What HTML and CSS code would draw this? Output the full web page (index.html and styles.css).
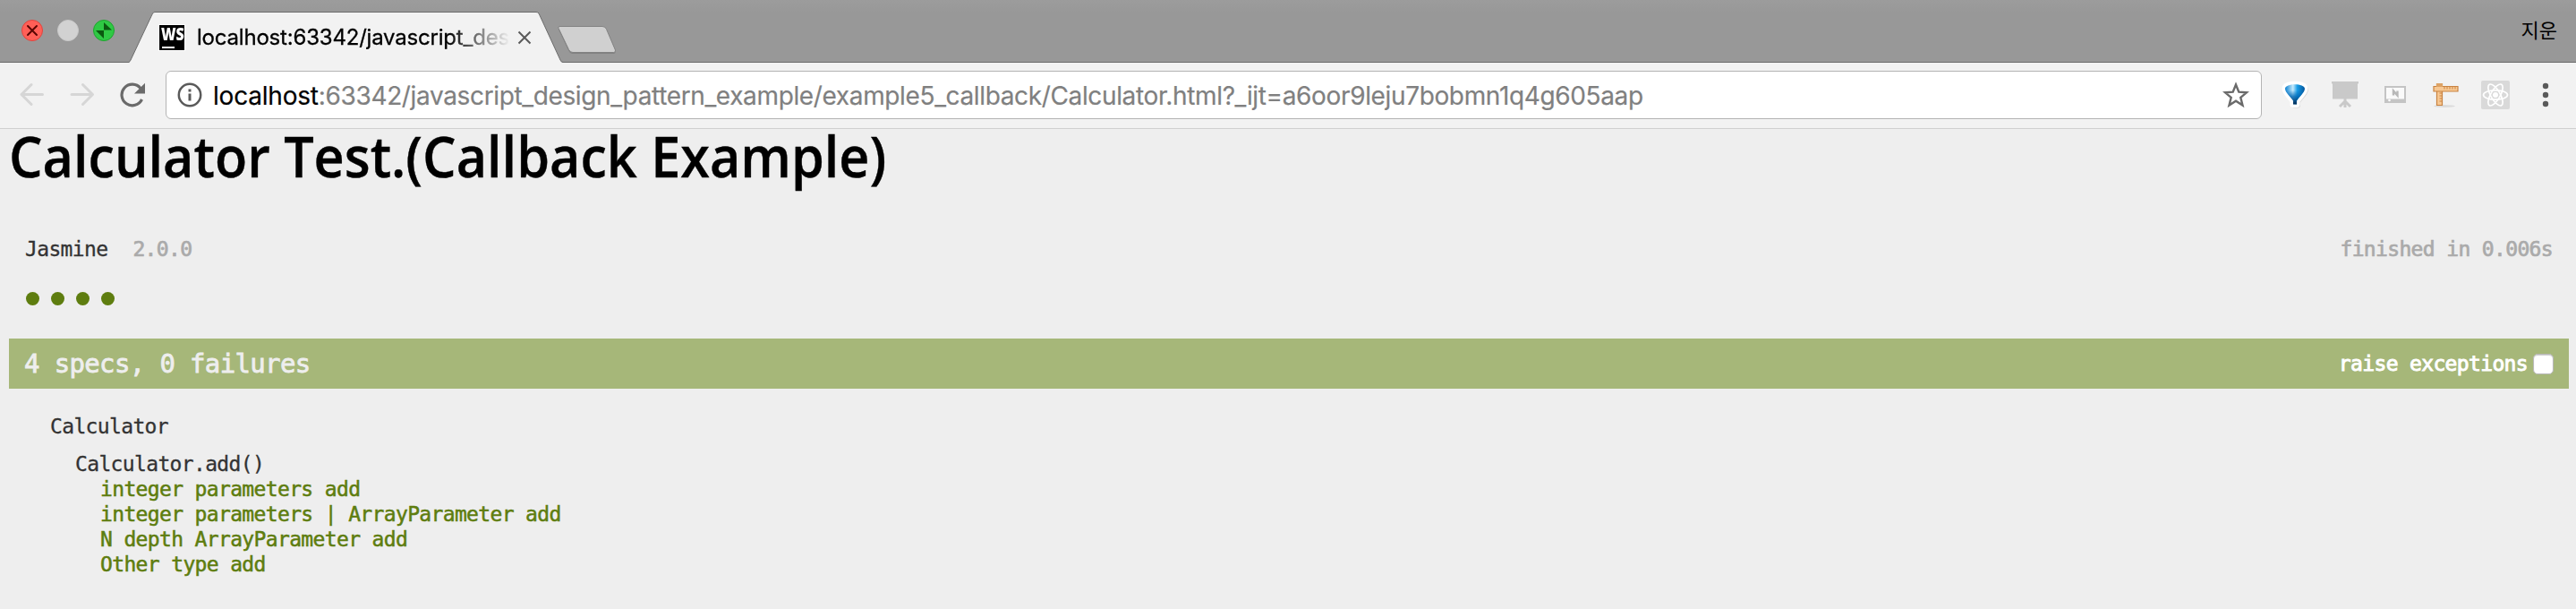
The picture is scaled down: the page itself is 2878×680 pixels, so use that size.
FILE: index.html
```html
<!DOCTYPE html>
<html lang="ko">
<head>
<meta charset="utf-8">
<title>Calculator Test</title>
<link rel="stylesheet" href="styles.css">
</head>
<body>
<header class="tabstrip">
  <svg class="lights" width="104" height="24" viewBox="0 0 104 24">
    <circle cx="12" cy="12" r="11.5" fill="#ff5f57" stroke="#e0443e"/>
    <path d="M7 7l10 10M17 7L7 17" stroke="#5a0603" stroke-width="2" stroke-linecap="round"/>
    <circle cx="52" cy="12" r="11.5" fill="#d2d2d2" stroke="#c8c8c8"/>
    <circle cx="92" cy="12" r="11.5" fill="#2fc944" stroke="#1fa32f"/>
    <path d="M92 3v8.500h9zM92 21v-9h-9z" fill="#0b5a10"/>
  </svg>
  <div class="tab">
    <svg class="tab-shape" width="486" height="57" viewBox="0 0 486 57">
      <path d="M0 57L1 56.500Q2 56 3 54L27.500 2Q28.500 .5 30 .5H456Q458 .5 459 2L483 54Q484 56 485 56.500L486 57z" fill="#f2f2f2"/>
      <path d="M0 56.500H1Q2 56 3 54L27.500 2Q28.500 .5 30 .5H456Q458 .5 459 2L483 54Q484 56.500 486 56.500" fill="none" stroke="#6c6c6c"/>
    </svg>
    <div class="tab-body">
      <span class="favicon"><b>WS</b><i></i></span>
      <span class="tab-title">localhost:63342/javascript_des</span>
      <svg class="tab-close" width="16" height="16" viewBox="0 0 16 16"><path d="M1.500 1.500l13 13M14.500 1.500l-13 13" stroke="#5a5a5a" stroke-width="2"/></svg>
    </div>
  </div>
  <svg class="new-tab" width="68" height="34" viewBox="0 0 68 34">
    <path d="M3 3H51Q54 3 55.500 6L65.500 29Q66 32 63.500 32H18Q15 32 13.500 29L2 5Q1.500 3 3 3z" fill="#808080"/>
    <path d="M3 1.500H51Q54 1.500 55.500 4.500L65.500 28Q66 30.500 63.500 30.500H18Q15 30.500 13.500 27.500L2 3.500Q1.500 1.500 3 1.500z" fill="#d0d0d0" stroke="#828282"/>
  </svg>
  <span class="profile">지운</span>
</header>
<nav class="toolbar">
  <svg class="nav-icons" width="140" height="28" viewBox="0 0 140 28">
    <g fill="none" stroke="#d6d6d6" stroke-width="3" stroke-linecap="round" stroke-linejoin="round">
      <path d="M25.500 13.500H2.500M13 2.500l-11 11 11 11"/>
      <path d="M58 13.500H81M70.500 2.500l11 11-11 11"/>
    </g>
    <path d="M136.500 19A11.800 11.800 0 1 1 135 6.500" fill="none" stroke="#6a6a6a" stroke-width="3.200"/>
    <path d="M140 .8V12.500H128z" fill="#6a6a6a"/>
  </svg>
  <div class="address">
    <svg width="28" height="28" viewBox="0 0 28 28"><circle cx="14" cy="14" r="12.200" fill="none" stroke="#5a5a5a" stroke-width="2.500"/><path d="M14 7.500v3M14 12.500v8" stroke="#5a5a5a" stroke-width="3"/></svg>
    <span class="url"><span class="host">localhost</span>:63342/javascript_design_pattern_example/example5_callback/Calculator.html?_ijt=a6oor9leju7bobmn1q4g605aap</span>
    <svg class="star" width="30" height="30" viewBox="0 0 30 30"><path d="M15 3.500l3.300 8.200 8.700.6-6.700 5.600 2.200 8.600-7.500-4.800-7.500 4.800 2.200-8.600L3 12.300l8.700-.6z" fill="none" stroke="#6a6a6a" stroke-width="2.400"/></svg>
  </div>
  <svg class="extensions" width="300" height="36" viewBox="0 0 300 36">
    <defs>
      <linearGradient id="balloon" x1="0" x2="1"><stop offset="0" stop-color="#0a7fd0"/><stop offset=".4" stop-color="#c4eafc"/><stop offset=".62" stop-color="#179ce6"/><stop offset="1" stop-color="#04569c"/></linearGradient>
      <linearGradient id="shade" x1="0" x2="0" y1="0" y2="1"><stop offset=".3" stop-color="#0068b4" stop-opacity="0"/><stop offset=".6" stop-color="#0068b4" stop-opacity=".8"/><stop offset="1" stop-color="#002b55"/></linearGradient>
      <path id="shape" d="M5 11C5 4.500 27 4.500 27 11C27 15 21 20 18 24.500V28.500H14V24.500C11 20 5 15 5 11z"/>
    </defs>
    <g stroke-linejoin="round">
      <use href="#shape" transform="translate(1 1)" fill="#d0d0d0" stroke="#d8d8d8" stroke-width="6"/>
      <use href="#shape" fill="#fff" stroke="#fff" stroke-width="7"/>
      <use href="#shape" fill="url(#balloon)"/>
      <use href="#shape" fill="url(#shade)"/>
    </g>
    <g fill="#c9c9c9"><path d="M57 3h30v2.500h-1V22.500H58V5.500h-1z"/><path d="M72 22v10M72 25l-6 6M72 25l6 6" stroke="#c9c9c9" stroke-width="3"/></g>
    <rect x="117" y="9" width="22" height="17" fill="#fafafa" stroke="#c4c4c4" stroke-width="2"/>
    <path d="M117 24h22" stroke="#c4c4c4" stroke-width="3"/><circle cx="121.500" cy="24" r="1.300" fill="#fff"/>
    <path d="M126 18.500v-5l4.500 5v-5" fill="none" stroke="#b8b8b8" stroke-width="2.400"/>
    <ellipse cx="183" cy="30.500" rx="12" ry="1.500" fill="#dcdcdc"/>
    <g fill="#f7c893" stroke="#c98341" stroke-width="1.200"><path d="M174.500 5.500h6v24h-6z"/><path d="M171 8.500h27v5.500h-27z"/></g>
    <path d="M174 5h7v4h-7z" fill="#dda366"/>
    <path d="M183 9v2.500M186 9v2.500M189 9v2.500M192 9v2.500M195 9v2.500M180 16h-2.500M180 19h-2.500M180 22h-2.500M180 25h-2.500" stroke="#c98341"/>
    <rect x="224" y="2" width="32" height="32" rx="2" fill="#d9d9d9"/>
    <g fill="none" stroke="#fff" stroke-width="1.700"><ellipse cx="240" cy="18" rx="13.500" ry="5.200"/><ellipse cx="240" cy="18" rx="13.500" ry="5.200" transform="rotate(60 240 18)"/><ellipse cx="240" cy="18" rx="13.500" ry="5.200" transform="rotate(120 240 18)"/></g>
    <circle cx="240" cy="18" r="3" fill="#fff"/>
    <g fill="#5a5a5a"><circle cx="296" cy="8" r="3.200"/><circle cx="296" cy="18" r="3.200"/><circle cx="296" cy="28" r="3.200"/></g>
  </svg>
</nav>
<main class="page">
  <h1>Calculator Test.(Callback Example)</h1>
  <div class="banner"><span>Jasmine</span><span class="muted version">2.0.0</span><span class="muted duration">finished in 0.006s</span></div>
  <div class="symbols"><i></i><i></i><i></i><i></i></div>
  <div class="bar"><span>4 specs, 0 failures</span><label class="exceptions">raise exceptions<span class="checkbox"></span></label></div>
  <div class="summary">
    <div>Calculator</div>
    <div class="suite">
      <div>Calculator.add()</div>
      <ul class="specs">
        <li>integer parameters add</li>
        <li>integer parameters | ArrayParameter add</li>
        <li>N depth ArrayParameter add</li>
        <li>Other type add</li>
      </ul>
    </div>
  </div>
</main>
</body>
</html>
```
FILE: styles.css
```css
* { box-sizing: border-box; }
body { margin: 0; height: 680px; overflow: hidden; background: #eee; }
svg { display: block; flex: none; }

.tabstrip {
  height: 70px;
  display: flex;
  align-items: flex-start;
  padding-left: 24px;
  background: linear-gradient(#9c9c9c, #989898 20%);
  box-shadow: inset 0 -1px #6c6c6c;
  font-family: Inter, sans-serif;
}
.lights { margin-top: 22px; }
.tab { display: grid; width: 486px; margin: 13px 0 0 15px; }
.tab-shape, .tab-body { grid-area: 1 / 1; }
.tab-body { display: flex; padding: 14px 0 0 34px; align-items: flex-start; }
.favicon {
  width: 30px;
  height: 30px;
  padding: 2px 0 0 2px;
  background: #000;
  border: 1px solid #fff;
  color: #fff;
  font: 700 19px/17px "Open Sans", sans-serif;
}
.favicon b { display: block; transform: scaleX(0.84); transform-origin: left; }
.favicon i { display: block; width: 14px; height: 2px; margin: 5px 0 0 1px; background: #fff; }
.tab-title {
  width: 360px;
  margin-left: 13px;
  white-space: nowrap;
  font-size: 24px;
  line-height: 30px;
  letter-spacing: -0.2px;
  -webkit-text-stroke: 0.3px #000;
  -webkit-mask-image: linear-gradient(90deg, #000 280px, transparent 350px);
  mask-image: linear-gradient(90deg, #000 280px, transparent 350px);
}
.tab-close { margin: 7px 0 0 -2px; }
.new-tab { margin: 28px 0 0 -7px; }
.profile { margin: 15px 21px 0 auto; font: 22px/34px "Noto Sans CJK KR", sans-serif; }

.toolbar {
  height: 74px;
  display: flex;
  padding: 9px 30px 0 22px;
  background: #f2f2f2;
  border-bottom: 1px solid #d0d0d0;
}
.nav-icons { margin-top: 13px; }
.address {
  width: 2342px;
  height: 54px;
  margin-left: 23px;
  padding: 0 13px 0 12px;
  display: flex;
  align-items: center;
  background: #fff;
  border: 1px solid #b4b4b4;
  border-radius: 6px;
  font-family: Inter, sans-serif;
  font-size: 28px;
}
.url { margin-left: 12px; padding-top: 2px; color: #808080; white-space: nowrap; letter-spacing: -0.36px; -webkit-text-stroke: 0.2px currentColor; }
.host { color: #000; letter-spacing: -0.2px; }
.star { margin-left: auto; }
.extensions { margin: 9px 0 0 21px; }

.page {
  padding: 0 8px 0 10px;
  font: 23px/28px "DejaVu Sans Mono", monospace;
  letter-spacing: -0.65px;
  -webkit-text-stroke: 0.3px currentColor;
  color: #333;
}
h1 {
  width: max-content;
  margin: 0;
  height: 120px;
  font: 600 63px/59px "Open Sans", sans-serif;
  letter-spacing: 0;
  -webkit-text-stroke: 0.4px #000;
  color: #000;
  white-space: nowrap;
  transform: scaleX(0.941);
  transform-origin: left;
}
.banner { display: flex; padding: 0 18px; }
.muted { color: #aaa; -webkit-text-stroke: 0.7px #aaa; }
.version { margin-left: 28px; }
.duration { margin-left: auto; }
.symbols { display: flex; gap: 13px; padding: 34px 0 0 19px; height: 86px; }
.symbols i { width: 15px; height: 15px; border-radius: 50%; background: #5e7d0f; }
.bar { display: flex; justify-content: space-between; height: 56px; padding: 0 17px; background: #a6b779; color: #eee; font-size: 29px; line-height: 56px; letter-spacing: -0.64px; -webkit-text-stroke: 0.8px #eee; }
.exceptions { display: flex; align-items: center; gap: 6px; font-size: 23px; letter-spacing: -0.65px; color: #fff; -webkit-text-stroke: 0.9px #fff; }
.checkbox { width: 23px; height: 23px; border: 1px solid #b8b8b8; border-radius: 5px; background: #fff; box-shadow: inset 0 1px 1px #ccc; }
.summary { padding: 28px 0 0 46px; }
.suite { padding: 14px 0 0 28px; }
.specs { margin: 0; padding: 0 0 0 28px; list-style: none; color: #5e7d0f; -webkit-text-stroke: 0.5px #5e7d0f; }
```
